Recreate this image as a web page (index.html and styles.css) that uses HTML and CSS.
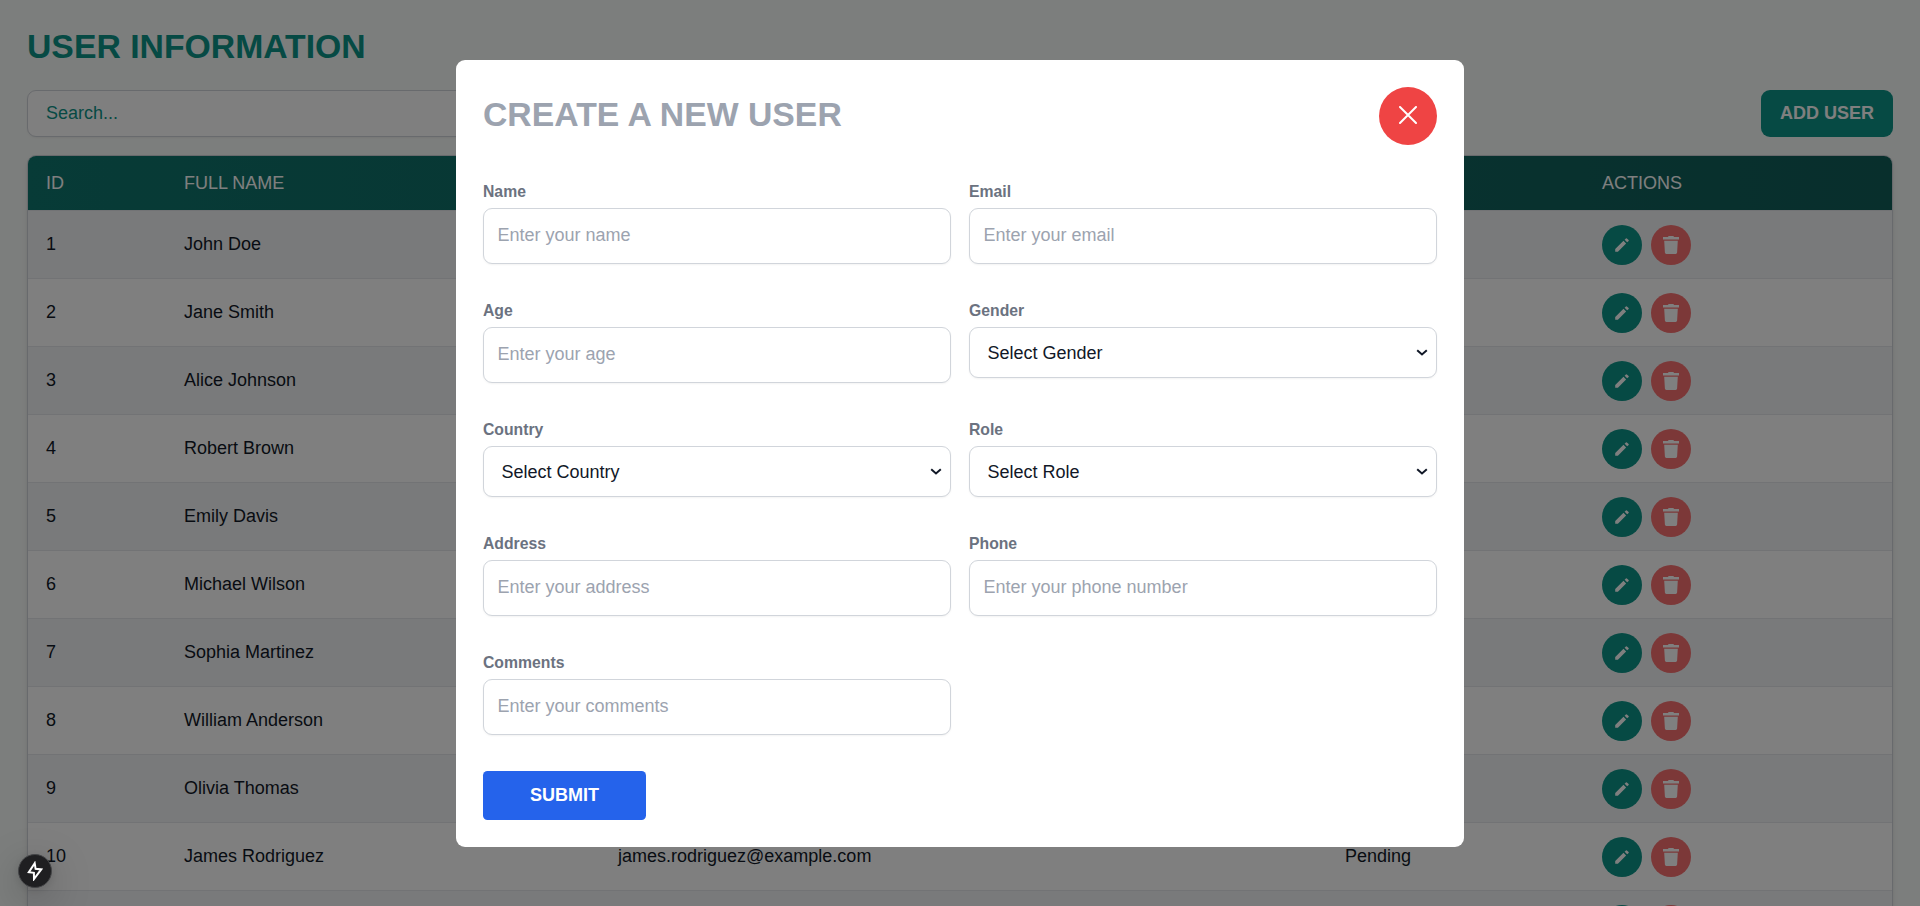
FILE: index.html
```html
<!DOCTYPE html>
<html lang="en">
<head>
<meta charset="utf-8">
<title>User Information</title>
<link rel="stylesheet" href="styles.css">
</head>
<body>
<svg class="sprite" aria-hidden="true">
  <symbol id="pencil" viewBox="0 0 14 14"><path d="M.2 11.1V13.8H2.9L11.1 5.4 8.5 2.8zM9.6 1.7L10.9.4Q11.4-.1 11.9.4L13.6 2.1Q14 2.6 13.6 3L12.2 4.3z"/></symbol>
  <symbol id="trash" viewBox="0 0 16 18"><path d="M0 1.1h5L5.6 0h4.8l.6 1.1h5v2.3H0zM1.2 4.8h13.6l-.7 11.8a1.5 1.5 0 0 1-1.5 1.4H3.4a1.5 1.5 0 0 1-1.5-1.4z"/></symbol>
  <symbol id="chevron" viewBox="0 0 12 7"><path d="M1.2 1.2L6 5.4l4.8-4.2"/></symbol>
</svg>
<main class="page">
  <h1 class="title">USER INFORMATION</h1>
  <div class="toolbar">
    <input class="search" type="text" placeholder="Search...">
    <button class="add" type="button">ADD USER</button>
  </div>
  <div class="card">
    <div class="row head"><span>ID</span><span>FULL NAME</span><span>EMAIL</span><span>STATUS</span><span>ACTIONS</span></div>
    <div id="rows"></div>
  </div>
</main>
<div class="overlay">
  <section class="modal">
    <header class="modal-head">
      <h2 class="modal-title">CREATE A NEW USER</h2>
      <button class="close" type="button" aria-label="Close"><svg class="x" viewBox="0 0 18 18"><path d="M1 1l16 16M17 1L1 17"/></svg></button>
    </header>
    <form class="form">
      <div class="grid">
        <label class="field"><span>Name</span><input type="text" placeholder="Enter your name"></label>
        <label class="field"><span>Email</span><input type="text" placeholder="Enter your email"></label>
        <label class="field"><span>Age</span><input type="text" placeholder="Enter your age"></label>
        <label class="field"><span>Gender</span><select><option>Select Gender</option></select><svg class="chevron"><use href="#chevron"/></svg></label>
        <label class="field"><span>Country</span><select><option>Select Country</option></select><svg class="chevron"><use href="#chevron"/></svg></label>
        <label class="field"><span>Role</span><select><option>Select Role</option></select><svg class="chevron"><use href="#chevron"/></svg></label>
        <label class="field"><span>Address</span><input type="text" placeholder="Enter your address"></label>
        <label class="field"><span>Phone</span><input type="text" placeholder="Enter your phone number"></label>
        <label class="field"><span>Comments</span><input type="text" placeholder="Enter your comments"></label>
      </div>
      <button class="submit" type="button">SUBMIT</button>
    </form>
  </section>
</div>
<div class="badge"><svg class="bolt" viewBox="0 0 16 20"><path d="M7.7 2.2L1.8 11.2L6.9 11.8L7 18L14.2 8.4L8.6 7.8Z"/></svg></div>
<script src="app.js"></script>
</body>
</html>
```
FILE: styles.css
```css
* { box-sizing: border-box; }
html { font-size: 18px; }
body {
  margin: 0;
  height: 906px;
  overflow: hidden;
  background: #f9fcfa;
  color: #111827;
  font-family: "Liberation Sans", Arial, sans-serif;
  line-height: 27px;
}
h1, h2 { margin: 0; }
button, input, select { font: inherit; color: inherit; }
button { border: 0; padding: 0; }
.sprite { display: none; }

.page { height: 906px; padding: 26px 27px 0; overflow: hidden; }
.title { color: #0d9488; font-size: 33.75px; line-height: 40.5px; margin-bottom: 23.5px; }
.toolbar { display: flex; justify-content: space-between; margin-bottom: 18px; }
.search {
  width: 576px;
  height: 47px;
  padding: 0 18px;
  border: 1px solid #d1d5db;
  border-radius: 9px;
  background: #fff;
  box-shadow: 0 1px 2px rgba(0, 0, 0, .05);
}
.search::placeholder { color: #0d9488; opacity: 1; }
.add {
  width: 132px;
  height: 47px;
  padding-bottom: 1px;
  border-radius: 9px;
  background: #0d9488;
  color: #fff;
  font-weight: 700;
}
.card {
  overflow: hidden;
  border: 1px solid #d1d5db;
  border-radius: 9px;
  background: #fff;
  box-shadow: 0 4px 6px -1px rgba(0, 0, 0, .1), 0 2px 4px -2px rgba(0, 0, 0, .1);
}
.row {
  display: grid;
  grid-template-columns: 138px 434px 727px 257px 308px;
  align-items: center;
  height: 68px;
  padding-top: 1px;
  border-top: 1px solid #e5e7eb;
}
.row > * { padding-left: 18px; }
.row > span { margin-top: -2px; }
.row:nth-child(odd) { background: #f3f4f6; }
.row.head {
  height: 54px;
  padding: 0;
  border: 0;
  background: linear-gradient(to right, #0f766e, #115e59);
  color: #fff;
}
.row.head > span { margin-top: 0; }
.actions { grid-column: 5; display: flex; gap: 9px; }
.icon-btn {
  display: flex;
  align-items: center;
  justify-content: center;
  width: 40px;
  height: 40px;
  border-radius: 50%;
  color: #fff;
}
.icon-btn svg { fill: currentColor; }
.edit { background: #0d9488; }
.edit svg { width: 14px; height: 14px; }
.delete { background: #f87171; }
.delete svg { width: 16px; height: 18px; }

.overlay {
  position: fixed;
  inset: 0;
  display: flex;
  align-items: center;
  justify-content: center;
  background: rgba(0, 0, 0, .5);
}
.modal { width: 1008px; height: 787px; padding: 27px; border-radius: 9px; background: #fff; }
.modal-head { display: flex; align-items: center; justify-content: space-between; margin-bottom: 36px; }
.modal-title { color: #9ca3af; font-size: 33.75px; line-height: 40.5px; padding-bottom: 2px; }
.close {
  display: flex;
  align-items: center;
  justify-content: center;
  width: 58px;
  height: 58px;
  padding-bottom: 1px;
  border-radius: 50%;
  background: #ef4444;
}
.x { width: 18px; height: 18px; fill: none; stroke: #fff; stroke-width: 2; stroke-linecap: round; }
.grid { display: grid; grid-template-columns: 1fr 1fr; gap: 36px 18px; align-items: start; }
.field { position: relative; display: flex; flex-direction: column; }
.field span {
  height: 27px;
  color: #6b7280;
  font-size: 15.75px;
  font-weight: 700;
  line-height: 22.5px;
}
.field input, .field select {
  width: 100%;
  border: 1px solid #d1d5db;
  border-radius: 9px;
  background: #fff;
  box-shadow: 0 1px 2px rgba(0, 0, 0, .05);
}
.field input { height: 56px; padding: 13px 13.5px 14px; }
.field input::placeholder { color: #9ca3af; opacity: 1; }
.field select { height: 51px; padding: 12px 17.5px; appearance: none; }
.chevron {
  position: absolute;
  right: 9px;
  bottom: 22px;
  width: 12px;
  height: 7px;
  fill: none;
  stroke: #111827;
  stroke-width: 2;
  pointer-events: none;
}
.submit {
  display: block;
  width: 163px;
  height: 49px;
  margin-top: 36px;
  border-radius: 4.5px;
  background: #2563eb;
  color: #fff;
  font-weight: 700;
}
.badge {
  position: fixed;
  left: 18px;
  bottom: 18px;
  display: flex;
  align-items: center;
  justify-content: center;
  width: 34px;
  height: 34px;
  border: 1px solid #444547;
  border-radius: 50%;
  background: #1f1f21;
  box-shadow: 0 11px 40px rgba(0, 0, 0, .25), 0 2px 10px rgba(0, 0, 0, .12);
}
.bolt { width: 16px; height: 20px; fill: none; stroke: #fff; stroke-width: 2; }
```
FILE: app.js
```js
const users = [
  ["John Doe", "Active"], ["Jane Smith", "Inactive"], ["Alice Johnson", "Pending"],
  ["Robert Brown", "Active"], ["Emily Davis", "Inactive"], ["Michael Wilson", "Active"],
  ["Sophia Martinez", "Pending"], ["William Anderson", "Active"], ["Olivia Thomas", "Inactive"],
  ["James Rodriguez", "Pending"]
];
const actions = `
    <div class="actions">
      <button class="icon-btn edit" type="button"><svg><use href="#pencil"/></svg></button>
      <button class="icon-btn delete" type="button"><svg><use href="#trash"/></svg></button>
    </div>`;
const rows = users.map(([name, status], i) => `
  <div class="row">
    <span>${i + 1}</span><span>${name}</span>
    <span>${name.toLowerCase().replace(" ", ".")}@example.com</span><span>${status}</span>
    ${actions}
  </div>`);
rows.push(`<div class="row">${actions}</div>`);
document.getElementById("rows").innerHTML = rows.join("");
```
